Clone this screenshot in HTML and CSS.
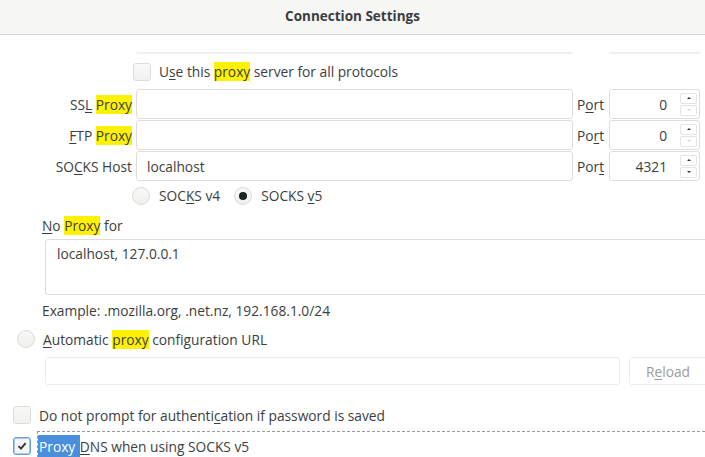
FILE: index.html
```html
<!DOCTYPE html>
<html>
<head>
<meta charset="utf-8">
<link rel="stylesheet" href="styles.css">
</head>
<body>
<header class="titlebar">Connection Settings</header>
<main class="content">
  <div class="grid">
    <div></div>
    <div class="cut-field"></div>
    <div></div>
    <div class="cut-field"></div>

    <div></div>
    <label class="check-row span3"><span class="checkbox"></span><span>U<u>s</u>e this <mark>proxy</mark> server for all protocols</span></label>

    <div class="label">SS<u>L</u> <mark>Proxy</mark></div>
    <div class="field"></div>
    <div class="port-label">P<u>o</u>rt</div>
    <div class="port"><span class="num">0</span><span class="spin"><span class="up"></span><span class="down dis"></span></span></div>

    <div class="label"><u>F</u>TP <mark>Proxy</mark></div>
    <div class="field"></div>
    <div class="port-label">Po<u>r</u>t</div>
    <div class="port"><span class="num">0</span><span class="spin"><span class="up"></span><span class="down dis"></span></span></div>

    <div class="label">SO<u>C</u>KS Host</div>
    <div class="field"><span class="val">localhost</span></div>
    <div class="port-label">Por<u>t</u></div>
    <div class="port"><span class="num">4321</span><span class="spin"><span class="up"></span><span class="down"></span></span></div>

    <div></div>
    <div class="radio-row span3">
      <label class="radio-item"><span class="radio"></span><span>SOC<u>K</u>S v4</span></label>
      <label class="radio-item"><span class="radio on"></span><span>SOCKS <u>v</u>5</span></label>
    </div>
  </div>

  <section class="noproxy">
    <div class="np-label"><u>N</u>o <mark>Proxy</mark> for</div>
    <div class="textarea">localhost, 127.0.0.1</div>
    <div class="example">Example: .mozilla.org, .net.nz, 192.168.1.0/24</div>
  </section>

  <label class="auto-row"><span class="radio"></span><span><u>A</u>utomatic <mark>proxy</mark> configuration URL</span></label>
  <div class="url-row">
    <div class="url-field"></div>
    <div class="reload">R<u>e</u>load</div>
  </div>

  <label class="bottom-check"><span class="checkbox"></span><span>Do not prompt for authenti<u>c</u>ation if password is saved</span></label>
  <label class="bottom-check dns"><span class="checkbox checked focus"><svg viewBox="0 0 12 12" width="12" height="12"><path d="M2.5 6.2 L5 8.6 L9.6 3.2" fill="none" stroke="#2e3436" stroke-width="1.8"/></svg></span><span class="dns-text"><span class="sel">Proxy </span><u>D</u>NS when using SOCKS v5</span></label>
</main>
</body>
</html>
```

FILE: styles.css
```css
* { box-sizing: border-box; }
html, body { margin: 0; padding: 0; background: #fff; }
body {
  width: 705px; height: 457px; overflow: hidden;
  font-family: "Open Sans", "Noto Sans", sans-serif;
  font-size: 13.75px;
  line-height: 17px;
  color: #3b3e40;
}
u { text-decoration-thickness: 1px; text-underline-offset: 2px; }
mark { background: #fff200; color: inherit; padding: 0; }

.titlebar {
  height: 35px;
  background: #f6f6f5;
  border-bottom: 1px solid #d6d6d4;
  display: flex; align-items: center; justify-content: center;
  font-weight: 700; font-size: 13.5px; color: #3b3d3e;
  padding-bottom: 2px;
}

.content { display: flex; flex-direction: column; }

.grid {
  display: grid;
  grid-template-columns: 132px 437px 28px 91px;
  column-gap: 4px;
  grid-template-rows: 19px 33px 30px 30px 30px 27px;
  row-gap: 1px;
  align-items: center;
}
.span3 { grid-column: 2 / span 3; }
.cut-field {
  align-self: stretch;
  border-bottom: 2px solid #efefee;
  border-radius: 0 0 3px 3px;
}
.check-row { display: flex; align-items: center; gap: 8px; margin-left: -3px; }
.checkbox {
  width: 18px; height: 18px; flex: none;
  border: 1px solid #dcdcda; border-radius: 3px;
  background: linear-gradient(#f8f8f7, #f1f1f0);
  display: inline-flex; align-items: center; justify-content: center;
}
.checkbox.checked { background: #f6f6f5; }
.checkbox.focus { border-color: #6a9ed8; box-shadow: 0 0 0 1px #a8c7ec inset; }
.label { text-align: right; white-space: nowrap; }
.field, .port {
  height: 30px;
  border: 1px solid #dedddb; border-radius: 3px;
  background: #fff;
  display: flex; align-items: center;
}
.field .val { padding-left: 10px; }
.port-label { white-space: nowrap; }
.port { justify-content: flex-end; padding-right: 2px; }
.port .num { margin-right: 13px; }
.spin {
  display: flex; flex-direction: column; gap: 1px;
  width: 17px;
}
.spin span {
  height: 11px; border: 1px solid #e4e4e2; border-radius: 2px;
  display: flex; justify-content: center; align-items: center;
}
.spin .up::after {
  content: ""; width: 0; height: 0;
  border-left: 2px solid transparent; border-right: 2px solid transparent;
  border-bottom: 2px solid #2e3436;
}
.spin .down::after {
  content: ""; width: 0; height: 0;
  border-left: 2px solid transparent; border-right: 2px solid transparent;
  border-top: 2px solid #2e3436;
}
.spin .down.dis::after { border-top-color: #d6d6d6; }

.radio-row { display: flex; align-items: center; gap: 14px; margin-left: -4px; }
.radio-item { display: flex; align-items: center; gap: 9px; }
.radio {
  width: 18px; height: 18px; flex: none; border-radius: 50%;
  border: 1px solid #dadad8;
  background: linear-gradient(#f8f8f7, #efefee);
  display: inline-flex; align-items: center; justify-content: center;
}
.radio.on::after {
  content: ""; width: 8px; height: 8px; border-radius: 50%; background: #1f2223;
}

.noproxy { padding-left: 42px; display: flex; flex-direction: column; }
.np-label { margin-top: 8px; height: 17px; }
.textarea {
  margin-top: 5px; margin-left: 3px;
  height: 56px; margin-right: -10px;
  border: 1px solid #dedddb; border-radius: 3px;
  padding: 5px 0 0 11px;
}
.example { margin-top: 7px; }

.auto-row { display: flex; align-items: center; gap: 8px; padding-left: 17px; margin-top: 11px; }
.url-row { display: flex; padding-left: 45px; gap: 9px; margin-top: 9px; margin-right: -8px; }
.url-field { width: 575px; height: 28px; border: 1px solid #ececea; border-radius: 3px; }
.reload {
  flex: 1; height: 28px; border: 1px solid #ececea; border-radius: 3px;
  display: flex; align-items: center; justify-content: center;
  color: #9a9c9d; padding-right: 6px;
}

.bottom-check { display: flex; align-items: center; gap: 8px; padding-left: 13px; margin-top: 21px; }
.bottom-check.dns { margin-top: 13px; position: relative; gap: 7px; }
.bottom-check.dns::before {
  content: ""; position: absolute; left: 37px; top: -6px; right: 0; height: 40px;
  border-top: 1px dashed #9a9a9a; border-left: 1px dashed #9a9a9a;
}
.sel { background: #4a8fdc; color: #fff; padding: 2px 1px 3px 1px; }
```
